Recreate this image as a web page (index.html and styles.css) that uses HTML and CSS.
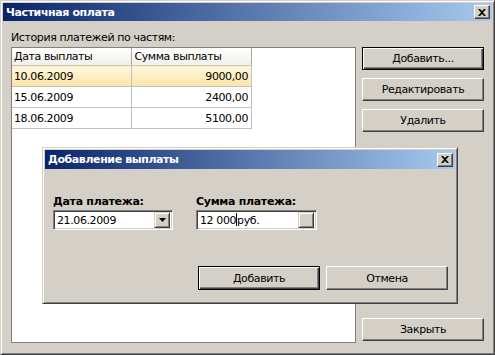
FILE: index.html
```html
<!DOCTYPE html>
<html lang="ru">
<head>
    <meta charset="UTF-8">
    <title>Частичная оплата</title>
    <link rel="stylesheet" href="styles.css">
</head>
<body>
    <div class="window">
        <div class="titlebar">
            <span class="title">Частичная оплата</span>
            <span class="close-btn">
                <svg width="8" height="7" viewBox="0 0 8 7"><path d="M0 0h2l2 2 2-2h2L5 3.5 8 7H6L4 5 2 7H0l3-3.5z" fill="#000"/></svg>
            </span>
        </div>
        <div class="content">
            <div class="history">
                <div class="caption">История платежей по частям:</div>
                <div class="listbox">
                    <table class="grid">
                        <thead>
                            <tr><th>Дата выплаты</th><th>Сумма выплаты</th></tr>
                        </thead>
                        <tbody>
                            <tr class="selected"><td>10.06.2009</td><td class="num">9000,00</td></tr>
                            <tr><td>15.06.2009</td><td class="num">2400,00</td></tr>
                            <tr><td>18.06.2009</td><td class="num">5100,00</td></tr>
                        </tbody>
                    </table>
                </div>
            </div>
            <div class="actions">
                <button class="btn default">Добавить...</button>
                <button class="btn">Редактировать</button>
                <button class="btn">Удалить</button>
                <button class="btn close">Закрыть</button>
            </div>
        </div>

        <!-- modal dialog over the main window -->
        <div class="dialog">
            <div class="titlebar">
                <span class="title">Добавление выплаты</span>
                <span class="close-btn">
                    <svg width="8" height="7" viewBox="0 0 8 7"><path d="M0 0h2l2 2 2-2h2L5 3.5 8 7H6L4 5 2 7H0l3-3.5z" fill="#000"/></svg>
                </span>
            </div>
            <div class="dlg-body">
                <div class="fields">
                    <div class="field">
                        <label>Дата платежа:</label>
                        <div class="input combo">
                            <span class="value">21.06.2009</span>
                            <span class="drop">
                                <svg width="7" height="4" viewBox="0 0 7 4"><path d="M0 0h7L3.5 4z" fill="#000"/></svg>
                            </span>
                        </div>
                    </div>
                    <div class="field">
                        <label>Сумма платежа:</label>
                        <div class="input money">
                            <span class="value">12 000<span class="caret"></span>руб.</span>
                            <span class="drop"></span>
                        </div>
                    </div>
                </div>
                <div class="dlg-buttons">
                    <button class="btn default">Добавить</button>
                    <button class="btn">Отмена</button>
                </div>
            </div>
        </div>
    </div>
</body>
</html>
```

FILE: styles.css
```css
body {
    margin: 0;
    font-family: 'DejaVu Sans', sans-serif;
    font-size: 11px;
    color: #000;
    background: #d4d0c8;
}

.window {
    position: relative;
    width: 495px;
    height: 355px;
    box-sizing: border-box;
    display: flex;
    flex-direction: column;
    padding: 2px;
    background: #d4d0c8;
    border: 1px solid;
    border-color: #d4d0c8 #404040 #404040 #d4d0c8;
    box-shadow: inset 1px 1px #fff, inset -1px -1px #808080;
}

.titlebar {
    height: 18px;
    flex-shrink: 0;
    display: flex;
    align-items: center;
    justify-content: space-between;
    padding: 0 2px 0 3px;
    background: linear-gradient(to right, #0a246a, #a6caf0);
}

.title {
    color: #fff;
    font-weight: bold;
    letter-spacing: -0.4px;
}

.close-btn {
    width: 16px;
    height: 14px;
    box-sizing: border-box;
    display: flex;
    align-items: center;
    justify-content: center;
    background: #d4d0c8;
    border: 1px solid;
    border-color: #fff #404040 #404040 #fff;
    box-shadow: inset -1px -1px #808080;
}

.content {
    flex: 1;
    display: flex;
    padding: 10px 8px 9px 8px;
    min-height: 0;
}

.history {
    flex: 1;
    display: flex;
    flex-direction: column;
}

.caption {
    height: 13px;
    line-height: 13px;
    margin-bottom: 3px;
    letter-spacing: -0.4px;
}

.listbox {
    flex: 1;
    background: #fff;
    border: 1px solid #808080;
}

.grid {
    border-collapse: collapse;
    width: 240px;
    letter-spacing: -0.4px;
}

.grid th {
    width: 120px;
    height: 17px;
    padding: 0 2px;
    text-align: left;
    font-weight: normal;
    background: linear-gradient(#ffffff, #f1efe8);
    border-right: 1px solid #a7a6a0;
    border-bottom: 1px solid #c7c5bc;
}

.grid td {
    height: 20px;
    padding: 0 3px 0 2px;
    border: 1px solid #c0c0c0;
    border-top: none;
    border-left: none;
}

.grid td.num {
    text-align: right;
}

.grid tr.selected td {
    background: linear-gradient(#fef6dc, #fbe5aa);
}

.actions {
    width: 122px;
    margin-left: 6px;
    padding-top: 16px;
    display: flex;
    flex-direction: column;
    gap: 8px;
}

.btn {
    height: 23px;
    padding: 0;
    font: inherit;
    letter-spacing: -0.4px;
    color: #000;
    background: #d4d0c8;
    border: 1px solid;
    border-color: #fff #404040 #404040 #fff;
    box-shadow: inset -1px -1px #808080;
}

.btn.default {
    border: 1px solid #000;
    box-shadow: inset 1px 1px #fff, inset -1px -1px #404040, inset -2px -2px #808080;
}

.btn.close {
    margin-top: auto;
    margin-bottom: 2px;
}

.dialog {
    position: absolute;
    left: 41px;
    top: 146px;
    width: 416px;
    height: 157px;
    box-sizing: border-box;
    padding: 2px;
    background: #d4d0c8;
    border: 1px solid;
    border-color: #d4d0c8 #404040 #404040 #d4d0c8;
    box-shadow: inset 1px 1px #fff, inset -1px -1px #808080;
}

.dialog .titlebar {
    height: 19px;
}

.dlg-body {
    padding: 26px 7px 0 8px;
}

.fields {
    display: flex;
    gap: 23px;
}

.field label {
    display: block;
    font-weight: bold;
    line-height: 13px;
    margin-bottom: 2px;
    letter-spacing: -0.3px;
}

.input {
    height: 20px;
    box-sizing: border-box;
    display: flex;
    align-items: center;
    justify-content: space-between;
    background: #fff;
    border: 1px solid;
    border-color: #808080 #fff #fff #808080;
    box-shadow: inset 1px 1px #404040, inset -1px -1px #d4d0c8;
    padding: 2px;
}

.combo {
    width: 120px;
}

.money {
    width: 121px;
}

.value {
    padding-left: 1px;
    letter-spacing: -0.4px;
}

.caret {
    display: inline-block;
    width: 1px;
    height: 13px;
    background: #000;
    vertical-align: -2px;
}

.drop {
    width: 16px;
    height: 16px;
    box-sizing: border-box;
    display: flex;
    align-items: center;
    justify-content: center;
    background: #d4d0c8;
    border: 1px solid;
    border-color: #d4d0c8 #404040 #404040 #d4d0c8;
    box-shadow: inset 1px 1px #fff, inset -1px -1px #808080;
}

.dlg-buttons {
    display: flex;
    justify-content: flex-end;
    gap: 6px;
    margin-top: 36px;
}

.dlg-buttons .btn {
    width: 122px;
    height: 24px;
}
```
